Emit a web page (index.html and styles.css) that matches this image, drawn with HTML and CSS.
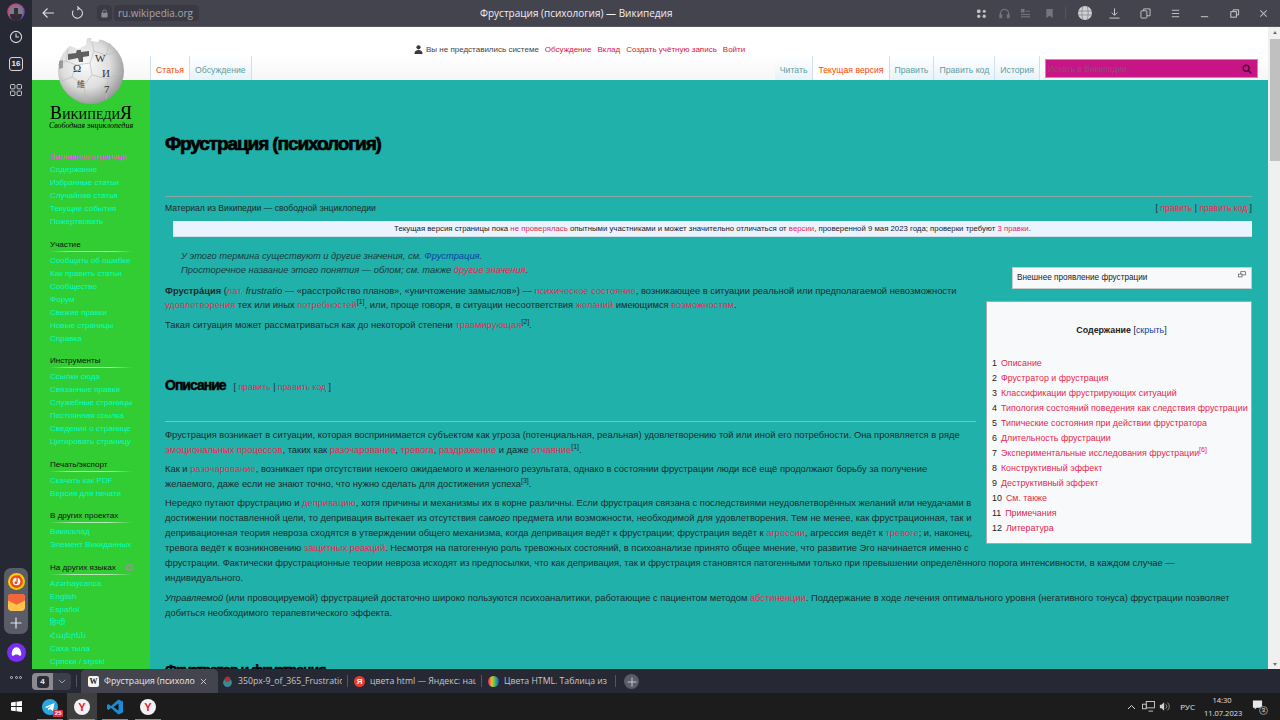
FILE: index.html
```html
<!DOCTYPE html>
<html lang="ru">
<head>
<meta charset="utf-8">
<title>Фрустрация (психология) — Википедия</title>
<link rel="stylesheet" href="styles.css">
</head>
<body>
<div class="screen">
  <div class="workspace">
    <aside class="rail">
      <div class="rail-top">
        <svg class="avatar" viewBox="0 0 18 18"><defs><linearGradient id="ring" x1="0" y1="0" x2="1" y2="1"><stop offset="0" stop-color="#e0405a"/><stop offset="1" stop-color="#5a4ae0"/></linearGradient></defs><circle cx="9" cy="9" r="8" fill="#7a7a88" stroke="url(#ring)" stroke-width="1.500"/><path d="M3 11h12v1a6 6 0 0 1-12 0z" fill="#302c34"/><rect x="7" y="5" width="4" height="8" fill="#3c2c38"/></svg>
        <svg class="ri" viewBox="0 0 14 14" fill="none" stroke="#d8d8dc" stroke-width="1.100"><circle cx="7" cy="7" r="5.600"/><path d="M7 3.600V7h3"/></svg>
        <span class="badge16">16</span>
        <svg class="ri" viewBox="0 0 14 14" fill="none" stroke="#c8c8cc" stroke-width="1"><rect x="1.500" y="1.500" width="4.400" height="4.400" rx=".8"/><rect x="8.100" y="1.500" width="4.400" height="4.400" rx=".8"/><rect x="1.500" y="8.100" width="4.400" height="4.400" rx=".8"/><rect x="8.100" y="8.100" width="4.400" height="4.400" rx=".8"/></svg>
      </div>
      <div class="rail-bottom">
        <div class="pill">
          <svg class="app" viewBox="0 0 16 16"><circle cx="8" cy="8" r="8" fill="#ffcc00"/><circle cx="8" cy="8" r="6" fill="#f04a20"/><circle cx="8" cy="8" r="3.600" fill="#fff"/><path d="M8.500 9V3.500l3-.8" stroke="#f04a20" stroke-width="1.200" fill="none"/><circle cx="7.400" cy="9.200" r="1.400" fill="#f04a20"/></svg>
          <svg class="app" viewBox="0 0 16 16"><rect width="16" height="16" rx="3.500" fill="#ffc34d"/><path d="M0 3.500A3.500 3.500 0 0 1 3.500 0h9A3.500 3.500 0 0 1 16 3.500V6L8 10 0 6z" fill="#f4663a"/></svg>
          <svg class="ri" viewBox="0 0 14 14" stroke="#e4e4e8" stroke-width="1.200"><path d="M7 1.500v11M1.500 7h11"/></svg>
        </div>
        <svg class="alice" viewBox="0 0 20 20"><circle cx="10" cy="10" r="10" fill="#7a2ff0"/><path d="M10 4.500c3.400 0 4.600 3.500 5 6.500.3 2-1 3-2 2.200-1-.8-1.600-1.200-3-1.200s-2 .4-3 1.200c-1 .8-2.300-.2-2-2.200.4-3 1.600-6.500 5-6.500z" fill="#fff"/></svg>
        <div class="dots"><i></i><i></i><i></i></div>
      </div>
    </aside>

    <div class="window">
      <header class="toolbar">
        <svg class="tb-ic back" viewBox="0 0 14 14" fill="none" stroke="#e0e0e4" stroke-width="1.100"><path d="M13 7H2M6.500 2.500 2 7l4.500 4.500"/></svg>
        <svg class="tb-ic reload" viewBox="0 0 14 14" fill="none" stroke="#d8d8dc" stroke-width="1.100"><path d="M7.500 2.200a5 5 0 1 1-4.300 2.400M7.200 .4 9.300 2.300 7.200 4.200"/></svg>
        <span class="lock"><svg viewBox="0 0 10 10" width="9" height="9"><rect x="1.500" y="4.200" width="7" height="5.300" rx=".8" fill="#8a8a92"/><path d="M3 4.500V3a2 2 0 0 1 4 0v1.500" fill="none" stroke="#8a8a92"/></svg></span>
        <span class="url">ru.wikipedia.org</span>
        <span class="wintitle">Фрустрация (психология) — Википедия</span>
        <div class="tb-right">
          <svg class="t1" viewBox="0 0 12 12" fill="#c0c0c4"><rect x="1" y="1.500" width="4" height="4" rx="1.500"/><circle cx="9" cy="3.500" r="1.700"/><circle cx="3" cy="9" r="1.800"/><circle cx="9" cy="9" r="1.800"/></svg>
          <svg class="t2" viewBox="0 0 12 12" fill="none" stroke="#74747c" stroke-width="1.300"><path d="M1.500 9V6a4.500 4.500 0 0 1 9 0v3"/><rect x="1" y="7.500" width="1.800" height="3" fill="#74747c"/><rect x="9.200" y="7.500" width="1.800" height="3" fill="#74747c"/></svg>
          <svg class="t3" viewBox="0 0 12 12" fill="#74747c"><rect x="1" y="1" width="4" height="4"/><rect x="6" y="3" width="5" height="1"/><rect x="1" y="6.500" width="10" height="1.200"/><rect x="1" y="9" width="10" height="1.200"/></svg>
          <svg class="t4" viewBox="0 0 12 12" fill="#74747c"><path d="M2.500 1h7v10L6 8.500 2.500 11z"/></svg>
          <span class="tb-sep"></span>
          <svg class="t5" viewBox="0 0 14 14"><circle cx="7" cy="7" r="7" fill="#cfcfd3"/><path d="M0 5h14M0 9h14M5 0c-1.500 4-1.500 10 0 14M9 0c1.500 4 1.500 10 0 14" stroke="#74747c" stroke-width=".6" fill="none"/></svg>
          <svg class="t6" viewBox="0 0 12 12" fill="none" stroke="#d4d4d8" stroke-width="1"><path d="M6 .5v7M3 5l3 3 3-3M.5 11h11"/></svg>
          <svg class="t7" viewBox="0 0 12 12" fill="none" stroke="#c8c8cc" stroke-width="1"><rect x="1" y="3" width="6.500" height="8" rx="1"/><path d="M4 3V1h7v7.500H7.500"/></svg>
          <svg class="t8" viewBox="0 0 12 12" stroke="#c8c8cc" stroke-width="1"><path d="M2 2.500h8M2 6h8M2 9.500h8"/></svg>
          <svg class="t9" viewBox="0 0 12 12" stroke="#d4d4d8" stroke-width="1"><path d="M2 9.500h8"/></svg>
          <svg class="t10" viewBox="0 0 12 12" fill="none" stroke="#d4d4d8" stroke-width="1"><rect x="2" y="4" width="6" height="6"/><path d="M4.500 4V2H10.500V7.500H8"/></svg>
          <svg class="t11" viewBox="0 0 12 12" stroke="#b8b8bc" stroke-width="1.100"><path d="M2.500 2.500l7 7M9.500 2.500l-7 7"/></svg>
        </div>
      </header>

      <div class="viewport">
        <div class="page">
          <div class="pagehead">
            <div class="personal">
              <svg class="usericon" viewBox="0 0 9 9" fill="#3a3a3a"><circle cx="4.500" cy="2.300" r="2.100"/><path d="M.5 9c0-3 1.500-4 4-4s4 1 4 4z"/></svg>
              <span class="plain">Вы не представились системе</span>
              <a>Обсуждение</a><a>Вклад</a><a>Создать учётную запись</a><a>Войти</a>
            </div>
            <nav class="tabsrow">
              <div class="vtabs">
                <span class="vtab sel">Статья</span>
                <span class="vtab">Обсуждение</span>
              </div>
              <div class="vtabs">
                <span class="vtab">Читать</span>
                <span class="vtab sel">Текущая версия</span>
                <span class="vtab">Править</span>
                <span class="vtab">Править код</span>
                <span class="vtab">История</span>
                <div class="search"><span>Искать в Википедии</span>
                  <svg viewBox="0 0 12 12" fill="none" stroke="#4a0a38" stroke-width="1.700"><circle cx="5" cy="5" r="3.500"/><path d="M7.500 7.500 11 11"/></svg>
                </div>
              </div>
            </nav>
          </div>

          <div class="pagebody">
            <aside class="sidebar">
              <div class="logo">
                <svg class="globe" viewBox="0 0 70 70">
                  <defs><radialGradient id="gl" cx=".42" cy=".4" r=".66"><stop offset="0" stop-color="#fbfbfb"/><stop offset=".55" stop-color="#dedede"/><stop offset="1" stop-color="#8e8e8e"/></radialGradient></defs>
                  <circle cx="35" cy="36" r="33" fill="url(#gl)"/>
                  <path d="M2 30 10 26 20 30 16 42 6 46M20 30 34 28 38 16 50 20 62 16M34 28 36 40 52 44 65 38M36 40 28 50 16 42M28 50 30 66M52 44 50 64M38 16 36 6M50 20 54 8M10 26 12 14" fill="none" stroke="#bcbcbc" stroke-width=".7"/>
                  <path d="M16 4 24 0 31 3 30 10 22 14 14 11zM36 0 46 1 42 7 35 6z" fill="#fff"/>
                  <path d="M12 19 20 18 21 15 25 15 25 17 33 16 33 21 27 22 27 27 23 27 22 23 12 25z" fill="#5f5f5f"/>
                  <path d="M3 26 7 25 7 33 3 34z" fill="#9a9a9a"/>
                  <text x="39" y="27" class="gg">W</text>
                  <text x="17" y="37" class="gg">Ω</text>
                  <text x="46" y="42" class="gg">И</text>
                  <text x="21" y="52" class="gg2">維</text>
                  <text x="48" y="58" class="gg">7</text>
                </svg>
                <div class="lg-name">ВикипедиЯ</div>
                <div class="lg-sub">Свободная энциклопедия</div>
              </div>
              <ul class="s-list first">
                <li class="visited">Заглавная страница</li><li>Содержание</li><li>Избранные статьи</li><li>Случайная статья</li><li>Текущие события</li><li>Пожертвовать</li>
              </ul>
              <h3 class="s-head">Участие</h3>
              <ul class="s-list">
                <li>Сообщить об ошибке</li><li>Как править статьи</li><li>Сообщество</li><li>Форум</li><li>Свежие правки</li><li>Новые страницы</li><li>Справка</li>
              </ul>
              <h3 class="s-head">Инструменты</h3>
              <ul class="s-list">
                <li>Ссылки сюда</li><li>Связанные правки</li><li>Служебные страницы</li><li>Постоянная ссылка</li><li>Сведения о странице</li><li>Цитировать страницу</li>
              </ul>
              <h3 class="s-head">Печать/экспорт</h3>
              <ul class="s-list">
                <li>Скачать как PDF</li><li>Версия для печати</li>
              </ul>
              <h3 class="s-head">В других проектах</h3>
              <ul class="s-list">
                <li>Викисклад</li><li>Элемент Викиданных</li>
              </ul>
              <h3 class="s-head lang">На других языках<svg class="gear" viewBox="0 0 10 10"><circle cx="5" cy="5" r="4.500" fill="#7fa07f"/><circle cx="5" cy="5" r="1.800" fill="#32cd32"/></svg></h3>
              <ul class="s-list">
                <li>Azərbaycanca</li><li>English</li><li>Español</li><li>हिन्दी</li><li>Հայերեն</li><li>Саха тыла</li><li>Српски / srpski</li>
              </ul>
            </aside>

            <main class="content">
              <h1 class="title">Фрустрация (психология)</h1>
              <div class="subline">
                <span>Материал из Википедии — свободной энциклопедии</span>
                <span class="edit">[ <a>править</a> | <a>править код</a> ]</span>
              </div>
              <div class="notice">Текущая версия страницы пока <a>не проверялась</a> опытными участниками и может значительно отличаться от <a>версии</a>, проверенной 9 мая 2023 года; проверки требуют <a>3 правки</a>.</div>
              <div class="article">
                <div class="floats">
                  <div class="caption">Внешнее проявление фрустрации
                    <svg class="magnify" viewBox="0 0 10 8" fill="none" stroke="#555" stroke-width=".9"><rect x="3.500" y=".5" width="6" height="4"/><rect x=".5" y="3.500" width="4.500" height="3.500" fill="#fff"/></svg>
                  </div>
                  <div class="toc">
                    <div class="toc-title"><b>Содержание</b> [<a class="blue">скрыть</a>]</div>
                    <ol class="toc-list">
                      <li><span>1</span><a>Описание</a></li>
                      <li><span>2</span><a>Фрустратор и фрустрация</a></li>
                      <li><span>3</span><a>Классификации фрустрирующих ситуаций</a></li>
                      <li><span>4</span><a>Типология состояний поведения как следствия фрустрации</a></li>
                      <li><span>5</span><a>Типические состояния при действии фрустратора</a></li>
                      <li><span>6</span><a>Длительность фрустрации</a></li>
                      <li><span>7</span><a>Экспериментальные исследования фрустрации<sup>[6]</sup></a></li>
                      <li><span>8</span><a>Конструктивный эффект</a></li>
                      <li><span>9</span><a>Деструктивный эффект</a></li>
                      <li><span>10</span><a>См. также</a></li>
                      <li><span>11</span><a>Примечания</a></li>
                      <li><span>12</span><a>Литература</a></li>
                    </ol>
                  </div>
                </div>
                <div class="hatnote"><i>У этого термина существуют и другие значения, см. <a class="blue">Фрустрация</a>.</i><br><i>Просторечное название этого понятия — облом; см. также <a>другие значения</a>.</i></div>
                <p class="lead"><b>Фрустра́ция</b> (<a>лат.</a> <i>frustratio</i> — «расстройство планов», «уничтожение замыслов») — <a>психическое состояние</a>, возникающее в ситуации реальной или предполагаемой невозможности <a>удовлетворения</a> тех или иных <a>потребностей</a><sup>[1]</sup>, или, проще говоря, в ситуации несоответствия <a>желаний</a> имеющимся <a>возможностям</a>.</p>
                <p class="lead-next">Такая ситуация может рассматриваться как до некоторой степени <a>травмирующая</a><sup>[2]</sup>.</p>
                <div class="h2wrap">
                  <h2 class="h2">Описание</h2><span class="edit h2edit">[ <a>править</a> | <a>править код</a> ]</span>
                </div>
                <p class="after-h2">Фрустрация возникает в ситуации, которая воспринимается субъектом как угроза (потенциальная, реальная) удовлетворению той или иной его потребности. Она проявляется в ряде <a>эмоциональных процессов</a>, таких как <a>разочарование</a>, <a>тревога</a>, <a>раздражение</a> и даже <a>отчаяние</a><sup>[1]</sup>.</p>
                <p>Как и <a>разочарование</a>, возникает при отсутствии некоего ожидаемого и желанного результата, однако в состоянии фрустрации люди всё ещё продолжают борьбу за получение желаемого, даже если не знают точно, что нужно сделать для достижения успеха<sup>[3]</sup>.</p>
                <p>Нередко путают фрустрацию и <a>депривацию</a>, хотя причины и механизмы их в корне различны. Если фрустрация связана с последствиями неудовлетворённых желаний или неудачами в достижении поставленной цели, то депривация вытекает из отсутствия <i>самого</i> предмета или возможности, необходимой для удовлетворения. Тем не менее, как фрустрационная, так и депривационная теория невроза сходятся в утверждении общего механизма, когда депривация ведёт к фрустрации; фрустрация ведёт к <a>агрессии</a>, агрессия ведёт к <a>тревоге</a>; и, наконец, тревога ведёт к возникновению <a>защитных реакций</a>. Несмотря на патогенную роль тревожных состояний, в психоанализе принято общее мнение, что развитие Эго начинается именно с фрустрации. Фактически фрустрационные теории невроза исходят из предпосылки, что как депривация, так и фрустрация становятся патогенными только при превышении определённого порога интенсивности, в каждом случае — индивидуального.</p>
                <p><i>Управляемой</i> (или провоцируемой) фрустрацией достаточно широко пользуются психоаналитики, работающие с пациентом методом <a>абстиненции</a>. Поддержание в ходе лечения оптимального уровня (негативного тонуса) фрустрации позволяет добиться необходимого терапевтического эффекта.</p>
                <h2 class="h2 second">Фрустратор и фрустрация</h2>
              </div>
            </main>
          </div>
        </div>
        <div class="scrollbar"><span class="arr up"></span><span class="thumb"></span><span class="arr down"></span></div>
      </div>

      <div class="tabstrip">
        <div class="counter"><span class="cnt"><b>4</b></span><span class="chev"><svg viewBox="0 0 8 5" width="8" height="5" fill="none" stroke="#a0a0a8"><path d="M.8 .8 4 4l3.200-3.200"/></svg></span></div>
        <span class="tsep"></span>
        <div class="tab active"><span class="fav wiki">W</span><span class="tname">Фрустрация (психологи</span><svg class="x" viewBox="0 0 8 8" stroke="#d0d0d4"><path d="M1 1l6 6M7 1 1 7"/></svg></div>
        <div class="tab tab-b"><svg class="favsvg" viewBox="0 0 10 10"><circle cx="5" cy="6" r="4" fill="#3a8a96"/><circle cx="5" cy="3" r="2.500" fill="#b03030"/></svg><span class="tname">350px-9_of_365_Frustration</span></div>
        <div class="tab tab-c"><span class="fav ya">Я</span><span class="tname">цвета html — Яндекс: наш</span></div>
        <div class="tab tab-d"><svg class="favsvg" viewBox="0 0 10 10"><defs><linearGradient id="rb" x1="0" x2="1"><stop offset="0" stop-color="#e02060"/><stop offset=".35" stop-color="#f0c020"/><stop offset=".65" stop-color="#30c060"/><stop offset="1" stop-color="#3040e0"/></linearGradient></defs><circle cx="5" cy="5" r="5" fill="url(#rb)"/></svg><span class="tname">Цвета HTML. Таблица из 1</span></div>
        <span class="plus"><svg viewBox="0 0 10 10" width="10" height="10" stroke="#c8c8cc"><path d="M5 .5v9M.5 5h9"/></svg></span>
      </div>
    </div>
  </div>

  <footer class="taskbar">
    <svg class="win" viewBox="0 0 14 14" fill="#fff"><path d="M0 2 6 1.100V6.500H0zM7 1 14 0V6.500H7zM0 7.500H6V12.900L0 12zM7 7.500H14V14L7 13z"/></svg>
    <div class="tasks">
      <div class="task run"><svg class="tk" viewBox="0 0 16 16"><circle cx="8" cy="8" r="8" fill="#2aa6e0"/><path d="M3 8l9.500-4L11 12 8 10l-1.500 1.500L6 9.500 10 6 5 9z" fill="#fff"/></svg><span class="tg">25</span></div>
      <div class="task run cur"><span class="yb">Y</span></div>
      <div class="task run"><svg class="tk" viewBox="0 0 16 16"><path d="M11.500 .5 16 2.500v11l-4.500 2L4 9 1.500 11 0 10V6l1.500-1L4 7z" fill="#1f8ad2"/><path d="M11.500 4.500v7L6.500 8z" fill="#111"/></svg></div>
      <div class="task run"><span class="yb">Y</span></div>
    </div>
    <div class="tray">
      <svg class="caret" viewBox="0 0 9 6" fill="none" stroke="#d8d8d8"><path d="M1 5 4.500 1.500 8 5"/></svg>
      <svg class="net" viewBox="0 0 14 12" fill="none" stroke="#d0d0d0"><rect x="4.500" y=".5" width="9" height="7"/><rect x=".5" y="3.500" width="4" height="5" fill="#1c1c1c"/><path d="M7 11h5"/></svg>
      <svg class="vol" viewBox="0 0 14 12" fill="#d0d0d0"><path d="M1 4h2l3-3v10L3 8H1z"/><path d="M8 3.500a3.500 3.500 0 0 1 0 5M10 1.500a6 6 0 0 1 0 9" fill="none" stroke="#a0a0a0"/></svg>
      <span class="lng">РУС</span>
      <span class="clock">14:30<br>11.07.2023</span>
      <span class="notif"><svg viewBox="0 0 12 12" fill="#e8e8e8"><path d="M1 1h10v8H5L3 11V9H1z"/></svg><em>3</em></span>
    </div>
  </footer>
</div>
</body>
</html>
```
FILE: styles.css
```css
* { box-sizing: border-box; }
html, body { margin: 0; padding: 0; height: 100%; overflow: hidden; }
body { font-family: "Liberation Sans", Arial, sans-serif; background: #1c1c1c; }
svg { display: block; flex: none; }
ul, ol { list-style: none; margin: 0; padding: 0; }
.screen { width: 1280px; height: 720px; display: flex; flex-direction: column; }
.workspace { height: 693px; display: flex; }

/* left rail */
.rail { width: 32px; background: #262833; display: flex; flex-direction: column; justify-content: space-between; align-items: center; flex: none; }
.rail-top { display: flex; flex-direction: column; align-items: center; padding-top: 3px; }
.avatar { width: 18px; height: 18px; margin-bottom: 9px; }
.ri { width: 14px; height: 14px; }
.badge16 { width: 14px; height: 14px; margin: 13px 0 12px; border: 1px solid #d8d8dc; border-radius: 3px; color: #e8e8ec; font: bold 8px/12px "Liberation Sans", sans-serif; text-align: center; }
.rail-bottom { display: flex; flex-direction: column; align-items: center; }
.pill { width: 24px; height: 66px; background: #5a5c68; border-radius: 7px; display: flex; flex-direction: column; align-items: center; justify-content: space-around; padding: 3px 0 2px; }
.app { width: 17px; height: 17px; }
.alice { width: 19px; height: 19px; margin-top: 9px; }
.dots { display: flex; gap: 1.500px; margin: 14px 0 14px; }
.dots i { width: 3px; height: 3px; border: 1px solid #c8c8cc; border-radius: 50%; }

/* browser window */
.window { flex: 1; min-width: 0; display: flex; flex-direction: column; }
.toolbar { height: 27px; background: #44444f; border-bottom: 1px solid #55555f; position: relative; display: flex; align-items: center; color: #fff; }
.tb-ic { width: 14px; height: 14px; }
.back { margin-left: 9px; }
.reload { margin-left: 15px; }
.lock { margin-left: 13px; width: 15px; height: 16px; background: #3a3a44; border-radius: 4px; display: flex; align-items: center; justify-content: center; }
.url { margin-left: 2px; height: 16px; padding: 0 4px; background: #3a3a44; border-radius: 4px; color: #a6a6ac; font: 10px/16px "Open Sans", sans-serif; width: 85px; white-space: nowrap; }
.wintitle { position: absolute; left: 448px; top: 6px; font: 10px/14px "Open Sans", sans-serif; color: #f0f0f2; white-space: nowrap; }
.tb-right { margin-left: auto; display: flex; align-items: center; padding-right: 11px; }
.tb-right svg { width: 11px; height: 11px; }
.t2 { margin-left: 12px; }
.t3 { margin-left: 10px; }
.t4 { margin-left: 13px; }
.tb-sep { width: 1px; height: 12px; background: #55555f; margin: 0 12px 0 10px; }
.tb-right .t5 { width: 14px; height: 14px; }
.t6 { margin-left: 17px; }
.t7 { margin-left: 20px; }
.t8 { margin-left: 19px; }
.t9 { margin-left: 18px; }
.t10 { margin-left: 19px; }
.t11 { margin-left: 18px; }

.viewport { height: 642px; display: flex; }
.page { flex: 1; min-width: 0; overflow: hidden; display: flex; flex-direction: column; background: #fff; }
.scrollbar { width: 12px; background: #f0f0f0; display: flex; flex-direction: column; align-items: center; flex: none; padding-left: 2px; }
.thumb { width: 10px; height: 122px; background: #c0c0c0; margin-top: 5px; }
.arr { width: 0; height: 0; border-left: 2.500px solid transparent; border-right: 2.500px solid transparent; }
.arr.up { border-bottom: 3px solid #707070; margin-top: 4px; }
.arr.down { border-top: 3px solid #707070; margin-top: auto; margin-bottom: 3px; }

/* wiki header */
.pagehead { height: 53px; flex: none; display: flex; flex-direction: column; background: linear-gradient(#fff 50%, #f6f6f6); font-size: 8.700px; }
.personal { display: flex; align-items: center; height: 29px; padding-top: 15px; padding-left: 382px; color: #444; white-space: nowrap; font-size: 8px; }
.personal a { color: #dc143c; margin-left: 6px; }
.personal .plain { margin: 0 0 0 3px; }
.usericon { width: 9px; height: 9px; }
.tabsrow { flex: 1; display: flex; justify-content: space-between; padding-left: 118px; align-items: flex-end; }
.vtabs { display: flex; align-items: flex-end; }
.vtab { height: 24px; padding: 9px 5px 0; color: #5f9ea0; white-space: nowrap; background: linear-gradient(#fff, #e8f2f8); border-right: 1px solid #cfe0ec; }
.vtabs:first-child .vtab:first-child { border-left: 1px solid #cfe0ec; }
.vtab.sel { background: #fff; color: #ff4500; }
.search { width: 213px; height: 19px; margin: 0 10px 2px 5px; background: #c71585; border: 1px solid #a0a0a0; display: flex; align-items: center; justify-content: space-between; padding: 0 5px 0 2px; color: #87517a; font-size: 8.500px; }
.search svg { width: 10px; height: 10px; }

.pagebody { flex: 1; min-height: 0; display: flex; }

/* sidebar */
.sidebar { width: 118px; flex: none; background: #32cd32; position: relative; padding: 70px 0 0 18px; font-size: 8.100px; }
.logo { position: absolute; left: 16px; top: -45px; width: 86px; text-align: center; color: #000; font-family: "Liberation Serif", serif; }
.globe { width: 70px; height: 70px; margin: 0 auto; }
.gg { font: 11px "Liberation Serif", serif; fill: #333; }
.gg2 { font: 8px "Noto Sans CJK SC", sans-serif; fill: #444; }
.lg-name { font-size: 17.800px; line-height: 15px; margin-top: 1px; font-variant: small-caps; white-space: nowrap; }
.lg-sub { font-size: 8px; line-height: 9px; font-style: italic; white-space: nowrap; }
.s-list.first { margin-bottom: 1.500px; }
.s-list li { height: 13px; line-height: 13px; color: #00ffc8; white-space: nowrap; font-family: "Liberation Sans", "Noto Sans", sans-serif; }
.s-list li.visited { color: #ff40ff; }
.s-head { margin: 10.500px 0 2px; font-size: 8.100px; line-height: 12px; height: 13px; font-weight: normal; color: #111; width: 82px; position: relative; border-bottom: 1px solid; border-image: linear-gradient(90deg, #32cd32, #b8e8b8 30%, #b8e8b8 70%, #32cd32) 1; white-space: nowrap; }
.gear { position: absolute; right: -2px; top: 1px; width: 9px; height: 9px; }

/* content */
.content { flex: 1; min-width: 0; background: #20b2aa; padding: 0 16px 0 15px; color: #1c2a2c; font-size: 9.350px; line-height: 15px; overflow: hidden; }
.content a { color: #e8274f; }
.content a.blue { color: #0b3fa8; }
.title { margin: 54px 0 0; font: bold 19px/19px "Liberation Sans", sans-serif; letter-spacing: -1.100px; color: #000; -webkit-text-stroke: .7px #000; height: 63px; border-bottom: 1px solid #8fa6a6; white-space: nowrap; }
.subline { display: flex; justify-content: space-between; margin-top: 4px; font-size: 8.600px; }
.notice { margin: 5px 0 0 8px; height: 16px; line-height: 15px; background: #eaf3ff; border: 1px solid #cfe0ec; border-width: 0 0 1px; text-align: center; color: #222; font-size: 7.800px; }
.article { margin-top: 12px; }
.floats { float: right; width: 266px; margin: 18px 0 0 10px; font-size: 8.200px; }
.caption { margin-left: 26px; height: 22px; background: #f8f9fa; border: 1px solid #c8ccd1; padding: 2px 4px; position: relative; color: #222; }
.magnify { position: absolute; right: 5px; top: 3px; width: 8px; height: 7px; }
.toc { margin-top: 12px; height: 243px; background: #f8f9fa; border: 1px solid #a2a9b1; padding-left: 5px; color: #222; font-size: 8.900px; }
.toc-title { text-align: center; padding-top: 21px; height: 54px; }
.toc-list li { height: 15px; white-space: nowrap; }
.toc-list span { margin-right: 4px; }
.hatnote { margin-left: 16px; line-height: 14px; color: #1c3a3c; }
p { margin: 4.200px 0 0; }
.lead { margin-top: 7px; line-height: 14px; }
.lead-next { margin-top: 6px; }
sup { font-size: 7px; line-height: 0; }
.h2wrap { margin-top: 43px; display: flex; align-items: baseline; gap: 8px; height: 46px; overflow: hidden; border-bottom: 1px solid #8fbcb8; }
.h2 { margin: 0; font: bold 14px/18px "Liberation Sans", sans-serif; letter-spacing: -1px; color: #000; -webkit-text-stroke: .5px #000; }
.h2edit { font-size: 8.700px; }
.content .after-h2 { margin-top: 6px; }
.second { margin-top: 40px; white-space: nowrap; }

/* tab strip */
.tabstrip { height: 24px; background: #262833; display: flex; align-items: stretch; font: 8.700px/24px "Open Sans", sans-serif; color: #c8c8cc; }
.counter { display: flex; width: 39px; height: 17px; margin-top: 4px; border-radius: 4px; overflow: hidden; }
.cnt { width: 21px; background: #8a8a90; display: flex; align-items: center; justify-content: center; }
.cnt b { width: 12px; height: 12px; background: #2a2c36; color: #f0f0f0; border-radius: 3px; font: bold 8px/12px "Liberation Sans", sans-serif; text-align: center; }
.chev { flex: 1; background: #3c3e4a; display: flex; align-items: center; justify-content: center; }
.tsep { width: 1px; height: 12px; background: #55575f; margin: 6px 4px 0 5px; }
.tab { display: flex; align-items: center; gap: 5px; width: 130px; padding: 0 6px 0 4px; overflow: hidden; white-space: nowrap; position: relative; flex: none; }
.tab.active { width: 137px; background: #44444f; color: #e8e8ec; border-radius: 5px 5px 0 0; padding: 0 11px 0 7px; }
.tab-c, .tab-d { width: 134px; padding-left: 6px; }
.tab-b::after, .tab-c::after, .tab-d::after { content: ""; position: absolute; right: 0; top: 6px; height: 12px; width: 1px; background: #55575f; }
.tname { flex: 1; overflow: hidden; }
.fav { width: 11px; height: 11px; flex: none; border-radius: 2px; text-align: center; font: bold 8px/11px "Liberation Serif", serif; }
.wiki { background: #f4f4f4; color: #222; }
.ya { background: #f03a2a; color: #fff; border-radius: 50%; font-family: "Liberation Sans", sans-serif; }
.favsvg { width: 11px; height: 11px; }
.x { width: 7px; height: 7px; }
.plus { width: 15px; height: 15px; border-radius: 50%; background: #5a5c68; margin: 5px 0 0 8px; display: flex; align-items: center; justify-content: center; }

/* taskbar */
.taskbar { height: 27px; background: #1c1c1c; display: flex; align-items: center; color: #e0e0e0; }
.win { width: 11px; height: 11px; margin-left: 11px; }
.tasks { display: flex; margin-left: 13px; align-self: stretch; }
.task { width: 30px; margin-right: 3px; position: relative; display: flex; align-items: center; justify-content: center; }
.task:first-child { margin-right: 2px; }
.task.run::after { content: ""; position: absolute; left: 2px; right: 2px; bottom: 0; height: 1.500px; background: #8a8a8a; }
.task.cur { background: #3e3e3e; }
.tk { width: 16px; height: 16px; }
.tg { position: absolute; right: 2px; bottom: 3px; background: #e0303a; color: #fff; font: bold 6px/7px "Liberation Sans", sans-serif; padding: 0 1.500px; border-radius: 1px; }
.yb { width: 16px; height: 16px; border-radius: 50%; background: #f2f2f2; color: #e8202a; font: bold 11px/16px "Liberation Sans", sans-serif; text-align: center; }
.tray { margin-left: auto; display: flex; align-items: center; padding-right: 12px; }
.caret { width: 9px; height: 6px; }
.net { width: 13px; height: 11px; margin-left: 6px; }
.vol { width: 12px; height: 11px; margin-left: 4px; }
.lng { margin-left: 9px; font: 8px/12px "Open Sans", sans-serif; }
.clock { margin-left: 9px; width: 36px; text-align: center; font: 7.500px/13px "Open Sans", sans-serif; white-space: nowrap; }
.notif { margin-left: 12px; position: relative; width: 16px; height: 16px; }
.notif svg { width: 11px; height: 12px; }
.notif em { position: absolute; right: 0; bottom: 0; width: 9px; height: 9px; border-radius: 50%; border: 1px solid #888; background: #2a2a2a; font: 6px/7px "Liberation Sans", sans-serif; text-align: center; }
```
